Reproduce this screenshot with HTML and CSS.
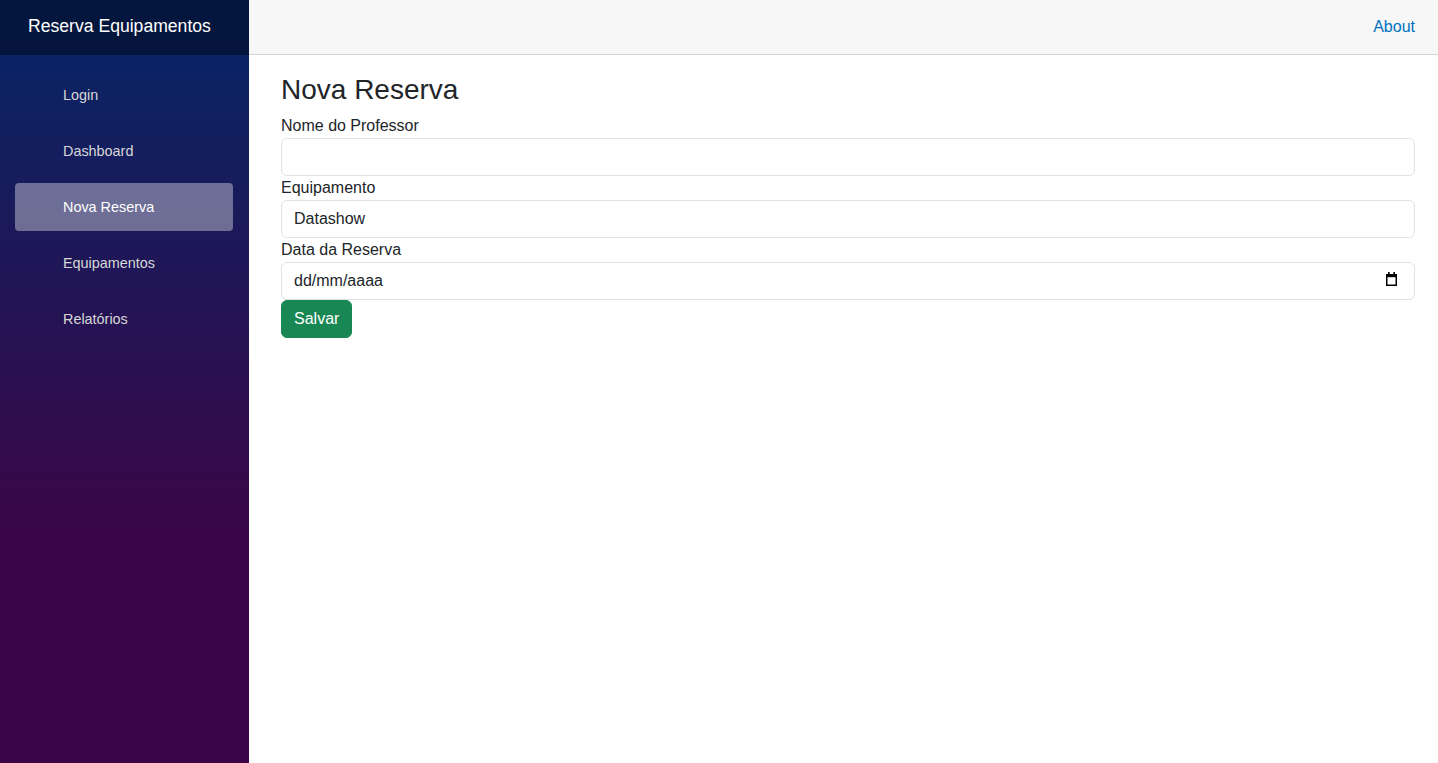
FILE: index.html
```html
<!DOCTYPE html>
<html lang="pt-BR">
<head>
<meta charset="utf-8">
<title>Reserva Equipamentos</title>
<link rel="stylesheet" href="styles.css">
</head>
<body>
<div class="page">
  <aside class="sidebar">
    <div class="brand-row">
      <a class="brand" href="#">Reserva Equipamentos</a>
    </div>
    <nav class="nav">
      <a class="nav-link" href="#">Login</a>
      <a class="nav-link" href="#">Dashboard</a>
      <a class="nav-link active" href="#">Nova Reserva</a>
      <a class="nav-link" href="#">Equipamentos</a>
      <a class="nav-link" href="#">Relatórios</a>
    </nav>
  </aside>
  <main class="main">
    <div class="top-row">
      <a class="about" href="#">About</a>
    </div>
    <article class="content">
      <h3 class="title">Nova Reserva</h3>
      <form class="form">
        <label class="label" for="prof">Nome do Professor</label>
        <input class="control" id="prof" type="text">
        <label class="label" for="equip">Equipamento</label>
        <input class="control" id="equip" type="text" value="Datashow">
        <label class="label" for="data">Data da Reserva</label>
        <div class="date-wrap">
          <input class="control date" id="data" type="text" placeholder="dd/mm/aaaa">
          <svg class="cal" width="11" height="14" viewBox="0 0 11 14" aria-hidden="true">
            <rect x="2" y="0" width="1.6" height="3" fill="#000"/>
            <rect x="7.4" y="0" width="1.6" height="3" fill="#000"/>
            <rect x="0" y="2" width="11" height="3.2" fill="#000"/>
            <rect x="0.75" y="2.75" width="9.5" height="10.5" fill="none" stroke="#000" stroke-width="1.5"/>
          </svg>
        </div>
        <div class="actions">
          <button class="btn" type="button">Salvar</button>
        </div>
      </form>
    </article>
  </main>
</div>
</body>
</html>
```

FILE: styles.css
```css
* { box-sizing: border-box; }

html, body {
  margin: 0;
  padding: 0;
  height: 100%;
}

body {
  font-family: "Liberation Sans", Arial, Helvetica, sans-serif;
  font-size: 16px;
  line-height: 1.5;
  color: #212529;
  background: #fff;
}

.page {
  display: flex;
  min-height: 100vh;
}

.sidebar {
  width: 249px;
  flex: 0 0 249px;
  background-image: linear-gradient(180deg, rgb(5, 39, 103) 0%, #3a0647 70%);
  display: flex;
  flex-direction: column;
}

.brand-row {
  height: 55px;
  background-color: rgba(0, 0, 0, 0.4);
  display: flex;
  align-items: center;
  padding-left: 28px;
}

.brand {
  color: #fff;
  font-size: 17.6px;
  text-decoration: none;
  line-height: 1;
  margin-top: -1px;
}

.nav {
  display: flex;
  flex-direction: column;
  gap: 8px;
  padding: 16px 16px 0 15px;
}

.nav-link {
  display: block;
  height: 48px;
  line-height: 48px;
  padding-left: 48px;
  border-radius: 4px;
  color: #d7d7d7;
  font-size: 14.4px;
  text-decoration: none;
}

.nav-link.active {
  background-color: rgba(255, 255, 255, 0.37);
  color: #fff;
}

.main {
  flex: 1;
  min-width: 0;
  display: flex;
  flex-direction: column;
}

.top-row {
  height: 55px;
  background-color: #f7f7f7;
  border-bottom: 1px solid #d6d5d5;
  display: flex;
  align-items: center;
  justify-content: flex-end;
  padding: 0 23px 0 32px;
}

.about {
  color: #0071c1;
  text-decoration: none;
  margin-top: -1px;
}

.content {
  padding: 18px 23px 0 32px;
}

.title {
  margin: 0 0 7px;
  font-size: 28px;
  font-weight: 500;
  line-height: 1.2;
}

.form {
  display: flex;
  flex-direction: column;
}

.label {
  display: block;
  line-height: 24px;
}

.control {
  display: block;
  width: 100%;
  height: 38px;
  padding: 6px 12px;
  font-family: inherit;
  font-size: 16px;
  line-height: 1.5;
  color: #212529;
  background: #fff;
  border: 1px solid #dee2e6;
  border-radius: 6px;
  outline: none;
}

.date-wrap {
  position: relative;
}

.date {
  padding-left: 12px;
}

.date::placeholder {
  color: #212529;
  opacity: 1;
}

.cal {
  position: absolute;
  right: 18px;
  top: 10px;
}

.actions {
  display: flex;
}

.btn {
  font-family: inherit;
  font-size: 16px;
  line-height: 1.5;
  padding: 6px 12px;
  color: #fff;
  background-color: #198754;
  border: 1px solid #198754;
  border-radius: 6px;
  cursor: pointer;
}
```
